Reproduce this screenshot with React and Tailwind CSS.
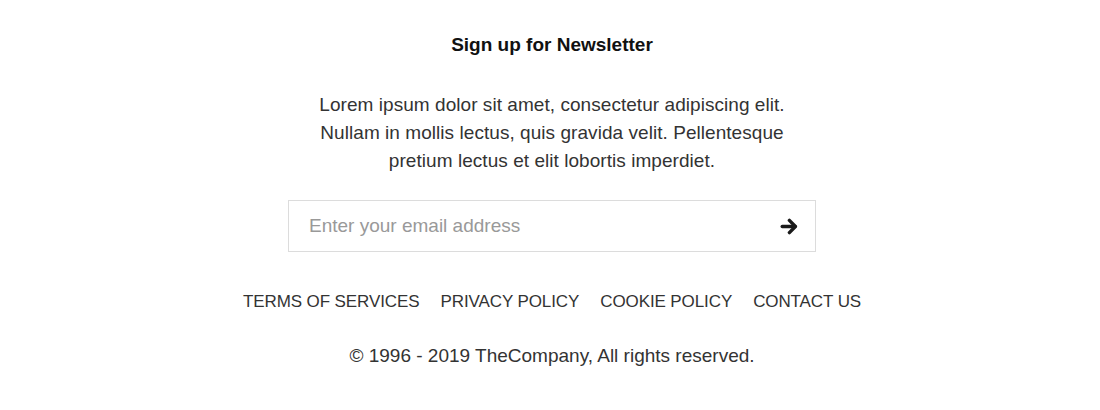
const links = ['TERMS OF SERVICES', 'PRIVACY POLICY', 'COOKIE POLICY', 'CONTACT US']

function ArrowIcon() {
  return (
    <svg width="18" height="17" viewBox="0 0 18 17" fill="none" stroke="currentColor" strokeWidth="3.4" strokeLinecap="round" strokeLinejoin="round">
      <path d="M2.2 8.5H15" />
      <path d="M9.4 2.4L15.4 8.5L9.4 14.6" />
    </svg>
  )
}

export default function App() {
  return (
    <div className="w-[1100px] h-[410px] pl-[4px] bg-white flex flex-col items-center text-[#333] font-['Liberation_Sans',Arial,sans-serif]">
      <h2 className="mt-[33px] text-[19px] leading-[24px] font-bold text-[#111]">Sign up for Newsletter</h2>
      <p className="mt-[34px] text-center text-[19px] leading-[28px] tracking-[0.05px]">
        Lorem ipsum dolor sit amet, consectetur adipiscing elit.
        <br />
        Nullam in mollis lectus, quis gravida velit. Pellentesque
        <br />
        pretium lectus et elit lobortis imperdiet.
      </p>
      <form
        className="mt-[25px] w-[528px] h-[52px] border border-[#dcdcdc] flex items-center"
        onSubmit={(e) => e.preventDefault()}
      >
        <input
          type="email"
          placeholder="Enter your email address"
          className="flex-1 h-full pl-[20px] text-[19px] outline-none placeholder:text-[#999] bg-transparent"
        />
        <button type="submit" className="w-[52px] h-full flex items-center justify-center text-[#1a1a1a]">
          <ArrowIcon />
        </button>
      </form>
      <nav className="mt-[38px] flex gap-[21px] text-[17px] leading-[24px] tracking-[-0.1px]">
        {links.map((l) => (
          <a key={l} href="#" className="text-[#333]">{l}</a>
        ))}
      </nav>
      <p className="mt-[30px] text-[19px] leading-[24px]">© 1996 - 2019 TheCompany, All rights reserved.</p>
    </div>
  )
}
